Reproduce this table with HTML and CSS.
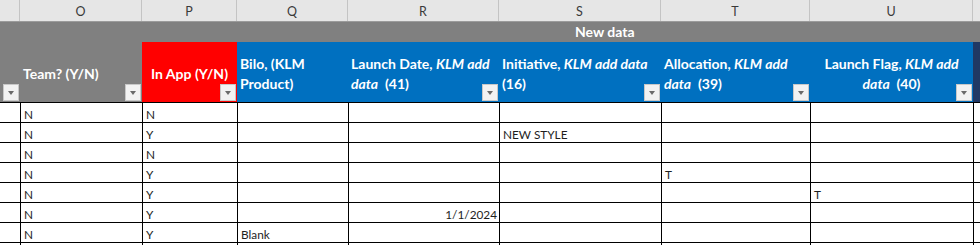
FILE: index.html
```html
<!DOCTYPE html>
<html>
<head>
<meta charset="utf-8">
<link rel="stylesheet" href="styles.css">
</head>
<body>
<div class="sheet">
  <div class="letters">
    <div class="lt"></div>
    <div class="lt">O</div>
    <div class="lt">P</div>
    <div class="lt">Q</div>
    <div class="lt">R</div>
    <div class="lt">S</div>
    <div class="lt">T</div>
    <div class="lt">U</div>
    <div class="lt"></div>
  </div>
  <div class="band"><span class="band-title">New data</span></div>
  <div class="heads">
    <div class="hd gray"><span class="flt"></span></div>
    <div class="hd gray"><span class="ht">Team? (Y/N)</span><span class="flt"></span></div>
    <div class="hd red center"><span class="ht">In App (Y/N)</span><span class="flt"></span></div>
    <div class="hd blue"><span class="ht">Bilo, (KLM<br>Product)</span></div>
    <div class="hd blue"><span class="ht">Launch Date, <i>KLM add</i><br><i>data</i>&nbsp; (41)</span><span class="flt"></span></div>
    <div class="hd blue"><span class="ht">Initiative, <i>KLM add data</i><br>(16)</span><span class="flt"></span></div>
    <div class="hd blue"><span class="ht">Allocation, <i>KLM add</i><br><i>data</i>&nbsp; (39)</span><span class="flt"></span></div>
    <div class="hd blue center"><span class="ht">Launch Flag, <i>KLM add</i><br><i>data</i>&nbsp; (40)</span><span class="flt"></span></div>
    <div class="hd navy"></div>
  </div>
  <div class="rows">
    <div class="c"></div><div class="c">N</div><div class="c">N</div><div class="c"></div><div class="c"></div><div class="c"></div><div class="c"></div><div class="c"></div><div class="c"></div>
    <div class="c"></div><div class="c">N</div><div class="c">Y</div><div class="c"></div><div class="c"></div><div class="c">NEW STYLE</div><div class="c"></div><div class="c"></div><div class="c"></div>
    <div class="c"></div><div class="c">N</div><div class="c">N</div><div class="c"></div><div class="c"></div><div class="c"></div><div class="c"></div><div class="c"></div><div class="c"></div>
    <div class="c"></div><div class="c">N</div><div class="c">Y</div><div class="c"></div><div class="c"></div><div class="c"></div><div class="c">T</div><div class="c"></div><div class="c"></div>
    <div class="c"></div><div class="c">N</div><div class="c">Y</div><div class="c"></div><div class="c"></div><div class="c"></div><div class="c"></div><div class="c">T</div><div class="c"></div>
    <div class="c"></div><div class="c">N</div><div class="c">Y</div><div class="c"></div><div class="c right">1/1/2024</div><div class="c"></div><div class="c"></div><div class="c"></div><div class="c"></div>
    <div class="c"></div><div class="c">N</div><div class="c">Y</div><div class="c">Blank</div><div class="c"></div><div class="c"></div><div class="c"></div><div class="c"></div><div class="c"></div>
  </div>
  <div class="rows tail">
    <div class="c"></div><div class="c"></div><div class="c"></div><div class="c"></div><div class="c"></div><div class="c"></div><div class="c"></div><div class="c"></div><div class="c"></div>
  </div>
</div>
</body>
</html>
```
FILE: styles.css
```css
* { box-sizing: border-box; }
html, body { margin: 0; padding: 0; background: #ffffff; }
body { width: 980px; height: 245px; overflow: hidden; font-family: Lato, "Open Sans", sans-serif; }

.sheet { width: 980px; height: 245px; overflow: hidden; }

.letters, .heads, .rows {
  display: grid;
  grid-template-columns: 20px 122px 95px 111px 151px 162px 149px 163px 7px;
}

.letters { height: 22px; background: #e6e6e6; border-bottom: 1px solid #9b9b9b; }
.lt {
  border-right: 1px solid #c4c4c4;
  display: flex; align-items: center; justify-content: center;
  font-size: 12.5px; color: #3a3a3a; padding-top: 1px;
}
.lt:last-child { border-right: none; }

.band { height: 20px; background: #808080; }
.band-title {
  display: block; padding-left: 575px; line-height: 20px;
  color: #fff; font-weight: bold; font-size: 14px;
}

.heads { height: 60px; }
.hd {
  position: relative;
  display: flex; align-items: center;
  padding: 0 3px; color: #fff; font-weight: bold; font-size: 14px; line-height: 20px;
}
.hd.center { justify-content: center; text-align: center; }
.hd.gray { background: #808080; }
.hd.red { background: #ff0000; }
.hd.blue { background: #0070c0; }
.hd.navy { background: #203864; }
.ht { display: block; padding-top: 3px; }

.flt {
  position: absolute; right: 1px; bottom: 1px;
  width: 16px; height: 17px;
  background: #f2f2f2; border: 1px solid #c8c8c8;
}
.flt::after {
  content: ""; position: absolute; left: 4px; top: 6px;
  border-left: 3.5px solid transparent; border-right: 3.5px solid transparent;
  border-top: 4px solid #6a6a6a;
}

.rows { grid-auto-rows: 20px; }
.rows.tail { grid-auto-rows: 3px; }
.c {
  border-top: 1px solid #000;
  border-left: 1px solid #000;
  font-size: 11.8px; color: #1e1e1e;
  padding: 5px 3px 0 3px; line-height: 14px; white-space: nowrap;
}
.c:nth-child(9n+1) { border-left: none; }
.c.right { text-align: right; padding-right: 2px; }
```
